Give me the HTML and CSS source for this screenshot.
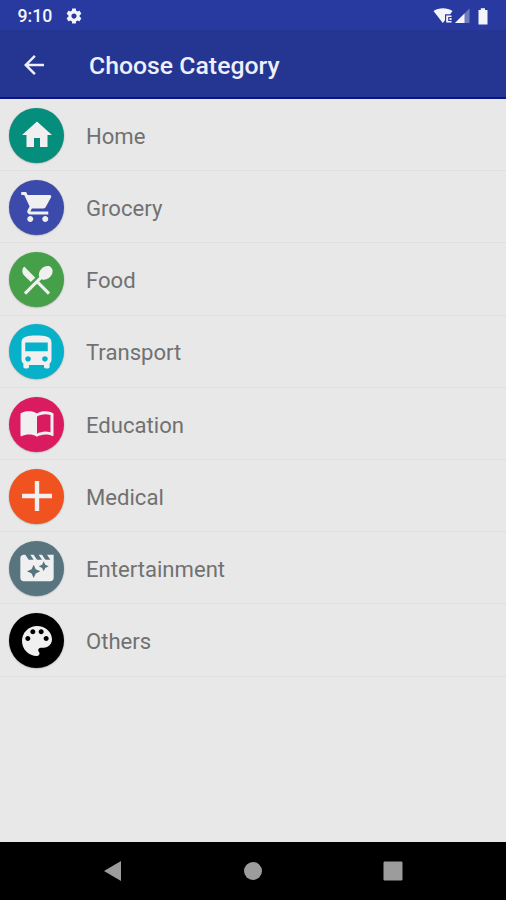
FILE: index.html
```html
<!DOCTYPE html>
<html lang="en">
<head>
    <meta charset="UTF-8">
    <title>Choose Category</title>
    <link rel="stylesheet" href="styles.css">
</head>
<body>
    <div class="screen">
        <div class="status-bar">
            <span class="clock">9:10</span>
            <svg class="gear" viewBox="0 0 24 24"><path d="M19.43 12.98c.04-.32.07-.64.07-.98s-.03-.66-.07-.98l2.11-1.65c.19-.15.24-.42.12-.64l-2-3.46c-.12-.22-.39-.3-.61-.22l-2.49 1c-.52-.4-1.08-.73-1.69-.98l-.38-2.65C14.46 2.18 14.25 2 14 2h-4c-.25 0-.46.18-.49.42l-.38 2.65c-.61.25-1.17.59-1.69.98l-2.49-1c-.23-.09-.49 0-.61.22l-2 3.46c-.13.22-.07.49.12.64l2.11 1.65c-.04.32-.07.65-.07.98s.03.66.07.98l-2.11 1.65c-.19.15-.24.42-.12.64l2 3.46c.12.22.39.3.61.22l2.49-1c.52.4 1.08.73 1.69.98l.38 2.65c.03.24.24.42.49.42h4c.25 0 .46-.18.49-.42l.38-2.65c.61-.25 1.17-.59 1.69-.98l2.49 1c.23.09.49 0 .61-.22l2-3.46c.12-.22.07-.49-.12-.64l-2.11-1.65zM12 15.5c-1.930 0-3.500-1.570-3.500-3.500s1.570-3.500 3.500-3.500 3.500 1.570 3.500 3.500-1.570 3.500-3.500 3.500z"/></svg>
            <svg class="signals" viewBox="0 0 58 18">
                <path d="M.5 4C6 .3 14 .3 19.500 4L17.200 7.200H12v6L9.800 16z"/>
                <path d="M13.200 8.500h5.300v1.500h-3.300v4h3.300v1.500h-5.300zM16.500 11h2v2h-2z"/>
                <path d="M36.500 1.500V16H22z" opacity=".35"/>
                <path d="M31.500 6.500V16H22z"/>
                <path d="M45.500 3h2.300V1.200h4.200V3h2.500v14.500h-9z"/>
            </svg>
        </div>
        <div class="toolbar">
            <svg class="back" viewBox="0 0 24 24"><path d="M20 11H7.830l5.590-5.590L12 4l-8 8 8 8 1.410-1.410L7.830 13H20v-2z"/></svg>
            <h1>Choose Category</h1>
        </div>

        <ul class="categories">
            <li class="category">
                <span class="circle home"><svg viewBox="0 0 24 24" width="36" height="36"><path d="M10 20v-6h4v6h5v-8h3L12 3 2 12h3v8z"/></svg></span>
                <span class="label">Home</span>
            </li>
            <li class="category">
                <span class="circle grocery"><svg viewBox="-0.500 0 24 24" width="36" height="36"><path d="M7 18c-1.100 0-1.990.9-1.990 2S5.900 22 7 22s2-.9 2-2-.9-2-2-2zM1 2v2h2l3.600 7.590-1.350 2.450c-.16.28-.25.61-.25.960 0 1.100.9 2 2 2h12v-2H7.420c-.14 0-.25-.11-.25-.25l.03-.12.9-1.630h7.450c.75 0 1.410-.41 1.750-1.030l3.580-6.490c.08-.14.12-.31.12-.48 0-.55-.45-1-1-1H5.210l-.94-2H1zm16 16c-1.100 0-1.990.9-1.990 2s.89 2 1.990 2 2-.9 2-2-.9-2-2-2z"/></svg></span>
                <span class="label">Grocery</span>
            </li>
            <li class="category">
                <span class="circle food"><svg viewBox="0 0 24 24" width="38" height="38"><path d="M8.100 13.340l2.830-2.830L3.910 3.500c-1.560 1.560-1.560 4.090 0 5.660l4.190 4.180zm6.780-1.810c1.530.71 3.680.21 5.270-1.380 1.910-1.910 2.280-4.650.81-6.120-1.460-1.460-4.200-1.100-6.120.81-1.590 1.590-2.090 3.740-1.380 5.270L3.700 19.870l1.410 1.410L12 14.410l6.880 6.880 1.410-1.410L13.410 13l1.470-1.470z"/></svg></span>
                <span class="label">Food</span>
            </li>
            <li class="category">
                <span class="circle transport"><svg viewBox="0 0.500 24 22" width="45" height="38" preserveAspectRatio="none"><path d="M4 16c0 .88.39 1.670 1 2.220V20c0 .55.45 1 1 1h1c.55 0 1-.45 1-1v-1h8v1c0 .55.45 1 1 1h1c.55 0 1-.45 1-1v-1.780c.61-.55 1-1.340 1-2.220V6c0-3.500-3.580-4-8-4s-8 .5-8 4v10zm3.500 1c-.83 0-1.500-.67-1.500-1.500S6.670 14 7.500 14s1.500.67 1.500 1.500S8.330 17 7.500 17zm9 0c-.83 0-1.500-.67-1.500-1.500s.67-1.500 1.500-1.500 1.500.67 1.500 1.500-.67 1.500-1.500 1.500zm1.500-6H6V6h12v5z"/></svg></span>
                <span class="label">Transport</span>
            </li>
            <li class="category">
                <span class="circle education"><svg viewBox="0 1 24 24" width="36" height="36"><path d="M21 5c-1.110-.35-2.330-.5-3.500-.5-1.950 0-4.050.4-5.500 1.500-1.450-1.100-3.550-1.500-5.500-1.500S2.450 4.900 1 6v14.650c0 .25.25.5.5.5.1 0 .15-.05.25-.05C3.100 20.450 5.050 20 6.500 20c1.950 0 4.050.4 5.500 1.500 1.350-.85 3.800-1.500 5.500-1.500 1.650 0 3.350.3 4.750 1.050.1.05.15.05.25.05.25 0 .5-.25.5-.5V6c-.6-.45-1.250-.75-2-1zm0 13.500c-1.100-.35-2.300-.5-3.500-.5-1.700 0-4.150.65-5.500 1.500V8c1.350-.85 3.800-1.500 5.500-1.500 1.200 0 2.400.15 3.500.5v11.500z"/></svg></span>
                <span class="label">Education</span>
            </li>
            <li class="category">
                <span class="circle medical"><svg viewBox="0 0 30 30" width="30" height="30"><path d="M12.800 0h4.400v12.800H30v4.400H17.200V30h-4.400V17.200H0v-4.400h12.800z"/></svg></span>
                <span class="label">Medical</span>
            </li>
            <li class="category">
                <span class="circle entertainment"><svg viewBox="0 0 24 24" width="40" height="40"><path d="M18 4l2 3h-3l-2-3h-2l2 3h-3l-2-3H8l2 3H7L5 4H4c-1.100 0-1.990.9-1.990 2L2 18c0 1.100.9 2 2 2h16c1.100 0 2-.9 2-2V4h-4zm-6.750 11.250L10 18l-1.250-2.750L6 14l2.750-1.250L10 10l1.250 2.750L14 14l-2.750 1.250zm5.690-3.310L16 14l-.94-2.060L13 11l2.060-.94L16 8l.94 2.060L19 11l-2.060.94z"/></svg></span>
                <span class="label">Entertainment</span>
            </li>
            <li class="category">
                <span class="circle others"><svg viewBox="0 0 24 24" width="40" height="40"><path d="M12 3c-4.970 0-9 4.030-9 9s4.030 9 9 9c.83 0 1.500-.67 1.500-1.500 0-.39-.15-.74-.39-1.010-.23-.26-.38-.61-.38-.99 0-.83.67-1.500 1.500-1.500H16c2.760 0 5-2.240 5-5 0-4.420-4.030-8-9-8zm-5.500 9c-.83 0-1.500-.67-1.500-1.500S5.670 9 6.500 9 8 9.670 8 10.500 7.330 12 6.500 12zm3-4C8.670 8 8 7.330 8 6.500S8.670 5 9.500 5s1.500.67 1.500 1.500S10.330 8 9.500 8zm5 0c-.83 0-1.500-.67-1.500-1.500S13.670 5 14.500 5s1.500.67 1.500 1.500S15.330 8 14.500 8zm3 4c-.83 0-1.500-.67-1.500-1.500S16.670 9 17.500 9s1.500.67 1.500 1.500-.67 1.500-1.500 1.500z"/></svg></span>
                <span class="label">Others</span>
            </li>
        </ul>

        <div class="nav-bar">
            <svg viewBox="0 0 20 22" width="20" height="22"><path d="M18 1v20L1 11z"/></svg>
            <svg viewBox="0 0 20 22" width="20" height="22"><circle cx="10" cy="11" r="9"/></svg>
            <svg viewBox="0 0 20 22" width="20" height="22"><rect x=".5" y="1.500" width="19" height="19" rx="1.200"/></svg>
        </div>
    </div>
</body>
</html>
```
FILE: styles.css
```css
* {
    box-sizing: border-box;
}
body {
    margin: 0;
    font-family: Roboto, "Liberation Sans", sans-serif;
    background: #e8e8e8;
}
.screen {
    display: flex;
    flex-direction: column;
    height: 900px;
}
svg {
    display: block;
    flex-shrink: 0;
}
.status-bar {
    display: flex;
    align-items: center;
    height: 30px;
    padding: 1px 15px 0 17.5px;
    background: #283a9f;
    color: #f4f5fc;
}
.status-bar svg {
    fill: #f4f5fc;
}
.clock {
    width: 47.5px;
    font-size: 17.7px;
    font-weight: 500;
}
.gear {
    width: 18px;
    height: 18px;
}
.signals {
    width: 58px;
    height: 18px;
    margin-left: auto;
}
.toolbar {
    display: flex;
    align-items: center;
    height: 69px;
    padding: 2px 0 0 19px;
    background: #243592;
    border-bottom: 2px solid #0d1486;
    color: #eeeffa;
}
.back {
    width: 30px;
    height: 30px;
    margin-right: 40px;
    fill: #eeeffa;
}
h1 {
    margin: 0;
    padding-top: 2px;
    font-size: 24.8px;
    font-weight: 500;
}
.categories {
    flex: 1;
    margin: 0;
    padding: 0;
    list-style: none;
}
.category {
    display: flex;
    align-items: center;
    height: 72.2px;
    padding: 1.4px 0 0 9px;
    border-bottom: 1px solid #dfdfdf;
}
.circle {
    display: flex;
    justify-content: center;
    align-items: center;
    width: 55px;
    height: 55px;
    margin-right: 22px;
    border-radius: 50%;
    box-shadow: 0 0.5px 1.5px rgba(0, 0, 0, 0.35);
}
.circle svg {
    fill: #f0f0f0;
}
.home {
    background: #068e7d;
}
.grocery {
    background: #3c4bab;
}
.food {
    background: #45a049;
}
.transport {
    background: #06b1c9;
}
.education {
    background: #db1b60;
}
.medical {
    background: #f05220;
}
.entertainment {
    background: #58757f;
}
.others {
    background: #000;
}
.label {
    padding-top: 1px;
    font-size: 22.1px;
    color: #717171;
}
.nav-bar {
    display: flex;
    justify-content: space-between;
    align-items: center;
    height: 58px;
    padding: 0 103px;
    background: #000;
}
.nav-bar svg {
    fill: #9c9c9c;
}
```
